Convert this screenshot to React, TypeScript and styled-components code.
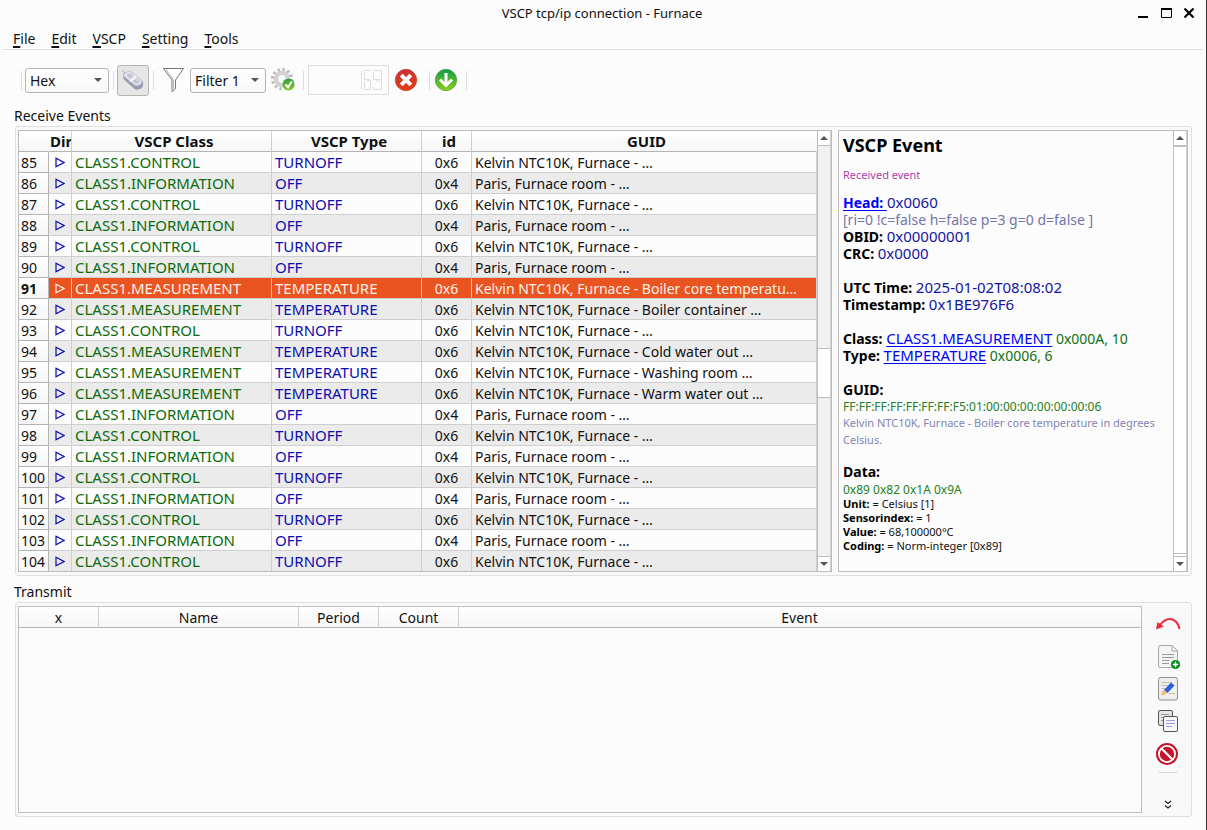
import React from "react";
import styled, { createGlobalStyle, css } from "styled-components";

const GlobalStyle = createGlobalStyle`
  * { box-sizing: border-box; }
  body { margin: 0; background: #fcfcfc; }
  body, button, select, input, table {
    font-family: "Noto Sans", "Open Sans", sans-serif;
    font-size: 14px;
    color: #111;
  }
`;

const Window = styled.div`
  min-height: 100vh;
  display: flex;
  flex-direction: column;
  background: #fcfcfc;
  border-right: 1px solid #333;
`;

const TitleBar = styled.header`
  display: grid;
  grid-template-columns: 1fr auto 1fr;
  align-items: center;
  height: 26px;
  padding: 0 10px 0 8px;
`;

const Title = styled.h1`
  grid-column: 2;
  margin: 0;
  font-size: 13px;
  font-weight: 400;
`;

const WindowButtons = styled.div`
  display: flex;
  justify-content: flex-end;
  gap: 9px;
`;

const PlainButton = styled.button`
  display: flex;
  align-items: center;
  justify-content: center;
  padding: 0;
  border: 0;
  background: none;
`;

const MenuBar = styled.nav`
  display: flex;
  align-items: center;
  gap: 16px;
  height: 24px;
  margin: 0 3px;
  padding: 2px 10px 0;
  border-bottom: 1px solid #dedede;
`;

const MenuItem = styled(PlainButton)`
  display: block;
  line-height: 20px;
  &::first-letter {
    text-decoration: underline;
    text-decoration-thickness: 2px;
    text-underline-offset: 2px;
  }
`;

const ToolBar = styled.div`
  display: flex;
  align-items: center;
  height: 56px;
  padding: 4px 21px 0;
`;

const Separator = styled.span<{ $before?: number; $after?: number }>`
  width: 1px;
  height: 19px;
  margin: 0 ${(p) => p.$after ?? 0}px 0 ${(p) => p.$before ?? 0}px;
  background: #dcdcdc;
`;

const Combo = styled.label<{ $width: number }>`
  display: grid;
  align-items: center;
  width: ${(p) => p.$width}px;
  > * { grid-area: 1 / 1; }
  > svg { justify-self: end; margin-right: 7px; pointer-events: none; }
`;

const Select = styled.select`
  appearance: none;
  width: 100%;
  height: 25px;
  padding: 0 4px;
  border: 1px solid #b4b4b4;
  border-radius: 3px;
  background: linear-gradient(#fff, #f8f8f8);
`;

const ToggleButton = styled(PlainButton)`
  width: 32px;
  height: 31px;
  border: 1px solid #b4b4b4;
  border-radius: 3px;
  background: #e6e6e6;
`;

const ToolButton = styled(PlainButton)<{ $before?: number; $after?: number }>`
  height: 26px;
  margin: 0 ${(p) => p.$after ?? 0}px 0 ${(p) => p.$before ?? 0}px;
`;

const Counter = styled.output`
  display: flex;
  align-items: center;
  justify-content: flex-end;
  width: 81px;
  height: 30px;
  padding-right: 6px;
  border: 1px solid #dedede;
`;

const Section = styled.section<{ $grow?: boolean }>`
  display: flex;
  flex-direction: column;
  flex: ${(p) => (p.$grow ? "1 0 auto" : "0 0 auto")};
  margin: 0 14px;
`;

const SectionTitle = styled.h2`
  margin: 0;
  font-size: 14px;
  font-weight: 400;
  line-height: 20px;
`;

const Group = styled.div<{ $columns: string }>`
  flex: 1;
  display: grid;
  grid-template-columns: ${(p) => p.$columns};
  margin: 0 0 0 1px;
  padding: 3px 3px 3px 2px;
  border: 1px solid #e0e0e0;
  border-radius: 3px;
  background: #f9f9f9;
`;

const Panel = styled.div`
  display: flex;
  min-width: 0;
  border: 1px solid #bdbdbd;
  background: #fcfcfc;
`;

const Grid = styled.table`
  width: 100%;
  align-self: flex-start;
  table-layout: fixed;
  border-collapse: separate;
  border-spacing: 0;
  flex: 1;
  min-width: 0;
`;

const headFill = css`
  background: linear-gradient(#fff, #f6f6f6);
`;

const HeadCell = styled.th`
  ${headFill}
  height: 21px;
  padding: 1px 4px 0;
  border-bottom: 1px solid #b4b4b4;
  border-right: 1px solid #cfcfcf;
  font-weight: 400;
  line-height: 19px;
  text-align: center;
  overflow: hidden;
  white-space: nowrap;
  &:last-child { border-right-color: transparent; }
`;

const BoldHeadCell = styled(HeadCell)`
  padding: 0 0 0 5px;
  font-size: 15px;
  font-weight: 700;
`;

const ClippedHeadCell = styled(BoldHeadCell)`
  padding: 0 0 0 1px;
  text-align: left;
`;

const CornerCell = styled(HeadCell)`
  border-right-color: transparent;
`;

const RowHead = styled.th<{ $selected: boolean }>`
  ${headFill}
  height: 21px;
  padding: 1px 0 0 2px;
  border-bottom: 1px solid #b4b4b4;
  border-right: 1px solid #b4b4b4;
  font-weight: ${(p) => (p.$selected ? 700 : 400)};
  line-height: 19px;
  text-align: left;
  white-space: nowrap;
`;

const Cell = styled.td<{ $tone?: string; $center?: boolean }>`
  height: 21px;
  padding: 1px 3px 0;
  border-bottom: 1px solid #cfcfcf;
  border-right: 1px solid #cfcfcf;
  color: ${(p) => p.$tone ?? "#111"};
  line-height: 19px;
  text-align: ${(p) => (p.$center ? "center" : "left")};
  overflow: hidden;
  text-overflow: ellipsis;
  white-space: nowrap;
  > svg { display: block; margin: 0 auto; }
`;

const CodeCell = styled(Cell)`
  font-size: 15px;
`;

const Row = styled.tr<{ $selected: boolean }>`
  background: ${(p) => (p.$selected ? "#e95420" : "#fcfcfc")};
  &:nth-child(even) { background: #ebebeb; }
  &:last-child > * { height: 20px; border-bottom: 0; }
  ${(p) => p.$selected && css`
    ${Cell} { color: #fff0e8; }
  `}
`;

const ScrollBar = styled.div<{ $fill: string }>`
  display: flex;
  flex-direction: column;
  flex: 0 0 14px;
  border-left: 1px solid #bdbdbd;
  border-right: 1px solid #cfcfcf;
  background: ${(p) => p.$fill};
`;

const ScrollArrow = styled(PlainButton)<{ $down?: boolean }>`
  height: 15px;
  background: #fff;
  border-${(p) => (p.$down ? "top" : "bottom")}: 1px solid #bdbdbd;
`;

const Track = styled.div`
  flex: 1;
  display: flex;
  flex-direction: column;
`;

const Thumb = styled.div<{ $size: number }>`
  flex: ${(p) => p.$size} 0 0;
  border-top: 1px solid #bdbdbd;
  border-bottom: 1px solid #bdbdbd;
  background: #fff;
`;

const Space = styled.div<{ $size: number }>`
  flex: ${(p) => p.$size} 0 0;
`;

const Details = styled.article`
  flex: 1;
  min-width: 0;
  padding: 2px 4px;
`;

const EventTitle = styled.h3`
  margin: 0 0 9px;
  font-size: 18px;
  line-height: 24px;
  color: #000;
`;

const Block = styled.div<{ $size?: number; $tight?: boolean; $tone?: string; $after?: number }>`
  margin-bottom: ${(p) => p.$after ?? 0}px;
  font-size: ${(p) => p.$size ?? 14}px;
  line-height: ${(p) => (p.$tight ? 14 : 17)}px;
  color: ${(p) => p.$tone ?? "#111"};
`;

const Label = styled.b`
  color: #000;
`;

const Value = styled.span<{ $tone: string; $size?: number }>`
  color: ${(p) => p.$tone};
  font-size: ${(p) => p.$size ?? 15}px;
  line-height: 14px;
`;

const Link = styled.a<{ $strong?: boolean }>`
  color: #0000ff;
  font-size: ${(p) => (p.$strong ? 14 : 15)}px;
  font-weight: ${(p) => (p.$strong ? 700 : 400)};
  line-height: 14px;
  text-underline-offset: 2px;
`;

const SideBar = styled.div`
  display: flex;
  flex-direction: column;
  align-items: center;
  padding: 6px 0 0 6px;
`;

const SideButton = styled(PlainButton)`
  width: 26px;
  height: 26px;
  margin-bottom: 6px;
`;

const SideRule = styled.span`
  width: 20px;
  height: 1px;
  background: #dcdcdc;
`;

const MoreButton = styled(PlainButton)`
  width: 20px;
  height: 16px;
  margin-top: auto;
`;

const GREEN = "#0b6b0b";
const BLUE = "#0c0cb0";
const NAVY = "#1414a0";

type EventRow = { no: number; cls: string; type: string; id: string; guid: string };

const control = (no: number): EventRow => ({
  no, cls: "CLASS1.CONTROL", type: "TURNOFF", id: "0x6", guid: "Kelvin NTC10K, Furnace - …",
});
const info = (no: number): EventRow => ({
  no, cls: "CLASS1.INFORMATION", type: "OFF", id: "0x4", guid: "Paris, Furnace room - …",
});
const measure = (no: number, what: string): EventRow => ({
  no, cls: "CLASS1.MEASUREMENT", type: "TEMPERATURE", id: "0x6", guid: `Kelvin NTC10K, Furnace - ${what}`,
});

const rows: EventRow[] = [
  control(85), info(86), control(87), info(88), control(89), info(90),
  measure(91, "Boiler core temperatu…"),
  measure(92, "Boiler container …"),
  control(93),
  measure(94, "Cold water out …"),
  measure(95, "Washing room …"),
  measure(96, "Warm water out …"),
  info(97), control(98), info(99), control(100), info(101), control(102), info(103), control(104),
];

const SELECTED = 91;

const Caret = ({ up }: { up?: boolean }) => (
  <svg width="8" height="4" viewBox="0 0 8 4" aria-hidden="true">
    <path d={up ? "M0 4L4 0L8 4Z" : "M0 0H8L4 4Z"} fill="#555" />
  </svg>
);

const DirIcon = ({ color }: { color: string }) => (
  <svg width="10" height="11" viewBox="0 0 10 11" aria-hidden="true">
    <path d="M1 1.2V9.8L9 5.5Z" fill="none" stroke={color} strokeWidth="1.2" />
  </svg>
);

const ConnectorIcon = () => (
  <svg width="24" height="24" viewBox="0 0 24 24" aria-hidden="true">
    <path d="M1 2.500L4 5" stroke="#c4c4d0" strokeWidth="1.500" />
    <path d="M2 7Q2 4.500 5 4L8 3Q10 2.500 12 4.500L21.500 13Q22.500 14.500 22 18Q21 21 17 21.500Q14.500 22 13 20.500L3 11.500Q2 10 2 7Z" fill="#9a9ab4" />
    <path d="M2.500 7Q3 4.800 5 4.200L8 3.200Q10 2.800 12 4.800L21 13Q21.500 15 18.500 17Q15.500 18.500 13.500 17L3 8.500Q2.500 8 2.500 7Z" fill="#dedeea" />
    <path d="M8.500 13Q13 12.500 14.500 7.500" fill="none" stroke="#f8f8fc" strokeWidth="1.300" />
    <path d="M6 7.500L9.500 5.500L12 8L8.500 10.200ZM12 13L15.500 11L18.500 13.500L15 15.500Z" fill="#b4b4c8" />
    <path d="M7.500 8.700L10.800 6.500M13.700 14.200L17 12.200" stroke="#e0e0ec" />
  </svg>
);

const FunnelIcon = () => (
  <svg width="22" height="26" viewBox="0 0 22 26" aria-hidden="true">
    <path d="M0.500 1.500H20.500L12.500 13V22L9 24.500V13Z" fill="#fff" stroke="#777" />
    <path d="M3 2.500L10.500 13V22" fill="none" stroke="#aaa" strokeWidth="0.800" />
  </svg>
);

const GearIcon = () => (
  <svg width="24" height="26" viewBox="0 0 24 26" aria-hidden="true">
    <defs>
      <linearGradient id="okFill" x1="0" y1="0" x2="0" y2="1">
        <stop offset="0" stopColor="#2ea043" />
        <stop offset="1" stopColor="#8cc820" />
      </linearGradient>
    </defs>
    <circle cx="11" cy="12" r="9.300" fill="none" stroke="#bdbdbd" strokeWidth="3.500" strokeDasharray="2.500 2.370" />
    <circle cx="11" cy="12" r="6.500" fill="none" stroke="#d2d2d2" strokeWidth="3.500" />
    <circle cx="11" cy="12" r="4.500" fill="#fcfcfc" stroke="#bbb" strokeWidth="0.800" />
    <circle cx="17.500" cy="17.500" r="6" fill="url(#okFill)" />
    <path d="M14.500 17.500L17 20.300L20.800 14.500" fill="none" stroke="#fff" strokeWidth="2" />
  </svg>
);

const LcdDigits = () => (
  <svg width="21" height="20" viewBox="0 0 21 20" fill="none" stroke="#dedede" aria-hidden="true">
    <path d="M0.500 1V9M0.500 11V19M2 0.500H9M3.500 2V9.500H9M3.500 11V19.500H9M6 10.500H9.500V19" />
    <path d="M12 0.500H20.500V9.500H12.500V2M12.500 17V19.500H20.500V11H15" />
  </svg>
);

const StopIcon = () => (
  <svg width="24" height="24" viewBox="0 0 24 24" aria-hidden="true">
    <defs>
      <linearGradient id="stopFill" x1="0" y1="0" x2="0" y2="1">
        <stop offset="0" stopColor="#c8323a" />
        <stop offset="1" stopColor="#e83c14" />
      </linearGradient>
    </defs>
    <circle cx="12" cy="12" r="10.700" fill="url(#stopFill)" stroke="#c02a2a" strokeWidth="0.600" />
    <path d="M7.200 7.200L16.800 16.800M16.800 7.200L7.200 16.800" stroke="#fff" strokeWidth="4" />
  </svg>
);

const DownIcon = () => (
  <svg width="24" height="24" viewBox="0 0 24 24" aria-hidden="true">
    <defs>
      <linearGradient id="downFill" x1="0" y1="0" x2="0" y2="1">
        <stop offset="0" stopColor="#0f9d4a" />
        <stop offset="1" stopColor="#94cc1c" />
      </linearGradient>
    </defs>
    <circle cx="12" cy="12" r="10.700" fill="url(#downFill)" stroke="#2f9a3a" strokeWidth="0.600" />
    <path d="M12 5V17M6 11.500L12 17.500L18 11.500" fill="none" stroke="#fff" strokeWidth="3" />
  </svg>
);

const UndoIcon = () => (
  <svg width="26" height="26" viewBox="0 0 26 26" aria-hidden="true">
    <path d="M5 13Q11 5.500 17.500 7.500Q23 9.500 24.500 17" fill="none" stroke="#f0283c" strokeWidth="2" />
    <path d="M1 17.500L2.500 10L9 14.500Z" fill="#f0283c" />
  </svg>
);

const AddPageIcon = () => (
  <svg width="26" height="26" viewBox="0 0 26 26" aria-hidden="true">
    <path d="M5.500 1.500H17L22.500 7V21.500Q22.500 23.500 20.500 23.500H5.500Q3.500 23.500 3.500 21.500V3.500Q3.500 1.500 5.500 1.500Z" fill="#f4f4f4" stroke="#a8a8a8" />
    <path d="M17 1.500V7H22.500Z" fill="#fff" stroke="#a8a8a8" />
    <path d="M7 10.500H19M7 13.500H19M7 16.500H14M7 19.500H14" stroke="#999" />
    <circle cx="20.500" cy="20.500" r="4.600" fill="#0a8a1e" />
    <path d="M20.500 17.800V23.200M17.800 20.500H23.200" stroke="#fff" strokeWidth="1.400" />
  </svg>
);

const EditIcon = () => (
  <svg width="26" height="26" viewBox="0 0 26 26" aria-hidden="true">
    <rect x="3.500" y="1.500" width="19" height="22.500" rx="2" fill="#efefef" stroke="#8f8f8f" />
    <path d="M6.500 6.500H17M6.500 9.500H14M6.500 12.500H11M6.500 15.500H9M14 17.500H20M6.500 17.500H8" stroke="#c4bca8" />
    <path d="M9 14L16 6.500L19.500 9.500L12.500 17Z" fill="#2b5fe0" />
    <path d="M9 14L12.500 17L6.500 20Z" fill="#f5b56a" />
  </svg>
);

const CopyIcon = () => (
  <svg width="26" height="26" viewBox="0 0 26 26" aria-hidden="true">
    <rect x="3.500" y="2.500" width="14" height="15" rx="1.500" fill="#e4e4e4" stroke="#555" />
    <path d="M6 6.500H14M6 9.500H9M6 12.500H9" stroke="#999" />
    <rect x="8.500" y="8.500" width="14" height="15" rx="1.500" fill="#f6f6fa" stroke="#555" />
    <path d="M11 12.500H20M11 15.500H20M11 18.500H17" stroke="#9c9ce8" />
  </svg>
);

const ForbidIcon = () => (
  <svg width="26" height="26" viewBox="0 0 26 26" aria-hidden="true">
    <circle cx="12" cy="14" r="10" fill="#fff" stroke="#c4142c" strokeWidth="2" />
    <circle cx="12" cy="14" r="7.200" fill="#c4142c" />
    <path d="M6.500 8.500L17.500 19.500" stroke="#fff" strokeWidth="2.200" />
  </svg>
);

const Scroller = ({ before, size, after, fill }: { before: number; size: number; after: number; fill: string }) => (
  <ScrollBar $fill={fill}>
    <ScrollArrow aria-label="Scroll up"><Caret up /></ScrollArrow>
    <Track>
      <Space $size={before} />
      <Thumb $size={size} />
      <Space $size={after} />
    </Track>
    <ScrollArrow $down aria-label="Scroll down"><Caret /></ScrollArrow>
  </ScrollBar>
);

const TransmitSection = styled(Section)`
  margin-top: 6px;
  margin-bottom: 13px;
`;

const SidePanel = styled(Panel)`
  margin-left: 6px;
`;

function DetailsPanel() {
  return (
    <SidePanel>
      <Details>
        <EventTitle>VSCP Event</EventTitle>
        <Block $size={11} $tone="#b040a8" $after={11}>Received event</Block>
        <Block $after={17}>
          <Link href="#head" $strong>Head: </Link><Value $tone={NAVY}>0x0060</Value><br />
          <Value $tone="#7474a8" $size={14}>[ri=0 !c=false h=false p=3 g=0 d=false ]</Value><br />
          <Label>OBID:</Label> <Value $tone={NAVY}>0x00000001</Value><br />
          <Label>CRC:</Label> <Value $tone={NAVY}>0x0000</Value>
        </Block>
        <Block $after={17}>
          <Label>UTC Time:</Label> <Value $tone={NAVY}>2025-01-02T08:08:02</Value><br />
          <Label>Timestamp:</Label> <Value $tone={NAVY}>0x1BE976F6</Value>
        </Block>
        <Block $after={17}>
          <Label>Class:</Label> <Link href="#class">CLASS1.MEASUREMENT</Link> <Value $tone="#107010" $size={14}>0x000A, 10</Value><br />
          <Label>Type:</Label> <Link href="#type">TEMPERATURE</Link> <Value $tone="#107010" $size={14}>0x0006, 6</Value>
        </Block>
        <Block $after={2}><Label>GUID:</Label></Block>
        <Block $size={12} $tight $tone="#248024">FF:FF:FF:FF:FF:FF:FF:F5:01:00:00:00:00:00:00:06</Block>
        <Block $size={11} $tone="#8484b0" $after={15}>
          Kelvin NTC10K, Furnace - Boiler core temperature in degrees Celsius.
        </Block>
        <Block $after={3}><Label>Data:</Label></Block>
        <Block $size={12} $tight $tone="#248024">0x89 0x82 0x1A 0x9A</Block>
        <Block $size={11} $tight>
          <Label>Unit:</Label> = Celsius [1]<br />
          <Label>Sensorindex:</Label> = 1<br />
          <Label>Value:</Label> = 68,100000°C<br />
          <Label>Coding:</Label> = Norm-integer [0x89]
        </Block>
      </Details>
      <Scroller before={0} size={408} after={2} fill="#fff" />
    </SidePanel>
  );
}

export default function App() {
  return (
    <Window>
      <GlobalStyle />
      <TitleBar>
        <Title>VSCP tcp/ip connection - Furnace</Title>
        <WindowButtons>
          <PlainButton aria-label="Minimize">
            <svg width="14" height="14" viewBox="0 0 14 14"><path d="M2 11H12" stroke="#000" strokeWidth="2" /></svg>
          </PlainButton>
          <PlainButton aria-label="Maximize">
            <svg width="14" height="14" viewBox="0 0 14 14"><path d="M2.500 3V11.500H12.500V3" fill="none" stroke="#000" /><path d="M2 3H13" stroke="#000" strokeWidth="2" /></svg>
          </PlainButton>
          <PlainButton aria-label="Close">
            <svg width="14" height="14" viewBox="0 0 14 14"><path d="M2.500 2.500L11.500 11.500M11.500 2.500L2.500 11.500" stroke="#000" strokeWidth="2.200" /></svg>
          </PlainButton>
        </WindowButtons>
      </TitleBar>

      <MenuBar>
        {["File", "Edit", "VSCP", "Setting", "Tools"].map((name) => (
          <MenuItem key={name}>{name}</MenuItem>
        ))}
      </MenuBar>

      <ToolBar>
        <Separator $after={3} />
        <Combo $width={84}>
          <Select aria-label="Number base" defaultValue="Hex"><option>Hex</option></Select>
          <Caret />
        </Combo>
        <Separator $before={4} $after={3} />
        <ToggleButton aria-label="Connection" aria-pressed="true"><ConnectorIcon /></ToggleButton>
        <Separator $before={4} $after={9} />
        <ToolButton aria-label="Filter" $after={5}><FunnelIcon /></ToolButton>
        <Combo $width={76}>
          <Select aria-label="Filter choice" defaultValue="Filter 1"><option>Filter 1</option></Select>
          <Caret />
        </Combo>
        <ToolButton aria-label="Apply filter" $before={5} $after={8}><GearIcon /></ToolButton>
        <Separator $after={4} />
        <Counter aria-label="Event count"><LcdDigits /></Counter>
        <ToolButton aria-label="Clear events" $before={5} $after={11}><StopIcon /></ToolButton>
        <Separator $after={4} />
        <ToolButton aria-label="Load" $after={8}><DownIcon /></ToolButton>
        <Separator />
      </ToolBar>

      <Section>
        <SectionTitle>Receive Events</SectionTitle>
        <Group $columns="minmax(0, 1fr) 356px">
          <Panel>
            <Grid>
              <colgroup>
                <col width="30" /><col width="23" /><col width="200" /><col width="150" /><col width="50" /><col />
              </colgroup>
              <thead>
                <tr>
                  <CornerCell aria-label="Number" />
                  <ClippedHeadCell>Dir</ClippedHeadCell>
                  <BoldHeadCell>VSCP Class</BoldHeadCell>
                  <BoldHeadCell>VSCP Type</BoldHeadCell>
                  <BoldHeadCell>id</BoldHeadCell>
                  <BoldHeadCell>GUID</BoldHeadCell>
                </tr>
              </thead>
              <tbody>
                {rows.map((r) => (
                  <Row key={r.no} $selected={r.no === SELECTED}>
                    <RowHead scope="row" $selected={r.no === SELECTED}>{r.no}</RowHead>
                    <Cell><DirIcon color={r.no === SELECTED ? "#fff0e8" : BLUE} /></Cell>
                    <CodeCell $tone={GREEN}>{r.cls}</CodeCell>
                    <CodeCell $tone={BLUE}>{r.type}</CodeCell>
                    <Cell $center>{r.id}</Cell>
                    <Cell>{r.guid}</Cell>
                  </Row>
                ))}
              </tbody>
            </Grid>
            <Scroller before={203} size={48} after={159} fill="#f1f1f1" />
          </Panel>
          <DetailsPanel />
        </Group>
      </Section>

      <TransmitSection $grow>
        <SectionTitle>Transmit</SectionTitle>
        <Group $columns="minmax(0, 1fr) 46px">
          <Panel>
            <Grid>
              <colgroup>
                <col width="80" /><col width="200" /><col width="80" /><col width="80" /><col />
              </colgroup>
              <thead>
                <tr>
                  {["x", "Name", "Period", "Count", "Event"].map((h) => (
                    <HeadCell key={h}>{h}</HeadCell>
                  ))}
                </tr>
              </thead>
            </Grid>
          </Panel>
          <SideBar>
            <SideButton aria-label="Send"><UndoIcon /></SideButton>
            <SideButton aria-label="Add"><AddPageIcon /></SideButton>
            <SideButton aria-label="Edit"><EditIcon /></SideButton>
            <SideButton aria-label="Duplicate"><CopyIcon /></SideButton>
            <SideButton aria-label="Delete"><ForbidIcon /></SideButton>
            <SideRule />
            <MoreButton aria-label="More">
              <svg width="8" height="10" viewBox="0 0 8 10"><path d="M1 1L4 3.500L7 1M1 5.500L4 8L7 5.500" fill="none" stroke="#222" strokeWidth="1.200" /></svg>
            </MoreButton>
          </SideBar>
        </Group>
      </TransmitSection>
    </Window>
  );
}
